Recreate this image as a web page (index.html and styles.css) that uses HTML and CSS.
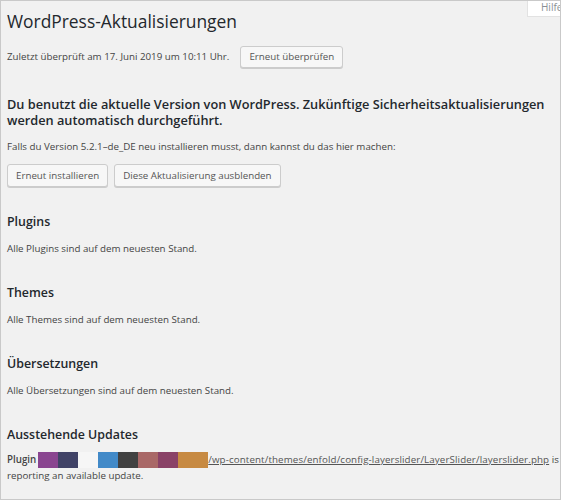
FILE: index.html
```html
<!DOCTYPE html>
<html lang="de">
<head>
<meta charset="utf-8">
<title>WordPress-Aktualisierungen</title>
<link rel="stylesheet" href="styles.css">
</head>
<body>
<div class="screen">
  <div class="help-tab">Hilfe</div>
  <div class="wrap">
    <h1 class="page-title">WordPress-Aktualisierungen</h1>
    <div class="checked-row">
      <span class="checked-text">Zuletzt überprüft am 17. Juni 2019 um 10:11 Uhr.</span>
      <button class="button">Erneut überprüfen</button>
    </div>

    <h2 class="response">Du benutzt die aktuelle Version von WordPress. Zukünftige Sicherheitsaktualisierungen werden automatisch durchgeführt.</h2>
    <p class="reinstall">Falls du Version 5.2.1–de_DE neu installieren musst, dann kannst du das hier machen:</p>
    <div class="actions">
      <button class="button button-tall">Erneut installieren</button>
      <button class="button button-tall">Diese Aktualisierung ausblenden</button>
    </div>

    <section class="block block-first">
      <h2 class="block-title">Plugins</h2>
      <p class="block-text">Alle Plugins sind auf dem neuesten Stand.</p>
    </section>
    <section class="block">
      <h2 class="block-title">Themes</h2>
      <p class="block-text">Alle Themes sind auf dem neuesten Stand.</p>
    </section>
    <section class="block">
      <h2 class="block-title">Übersetzungen</h2>
      <p class="block-text">Alle Übersetzungen sind auf dem neuesten Stand.</p>
    </section>
    <section class="block">
      <h2 class="block-title">Ausstehende Updates</h2>
      <p class="pending"><strong>Plugin</strong><span class="redact"><span class="sw sw-purple"></span><span class="sw sw-navy"></span><span class="sw sw-blank"></span><span class="sw sw-blue"></span><span class="sw sw-dark"></span><span class="sw sw-mauve"></span><span class="sw sw-plum"></span><span class="sw sw-orange"></span></span><a class="path" href="#">/wp-content/themes/enfold/config-layerslider/LayerSlider/layerslider.php</a> is<br>reporting an available update.</p>
    </section>
  </div>
</div>
</body>
</html>
```

FILE: styles.css
```css
* {
  box-sizing: border-box;
}

html,
body {
  margin: 0;
  padding: 0;
  background: #ffffff;
}

body {
  font-family: "Open Sans", "Noto Sans", sans-serif;
  font-size: 9.75px;
  line-height: 16px;
  color: #444444;
}

.screen {
  position: relative;
  width: 561px;
  height: 500px;
  border: 1px solid #c9c9c9;
  background: #f1f1f1;
  overflow: hidden;
}

.help-tab {
  position: absolute;
  top: 0;
  left: 526px;
  width: 44px;
  height: 16px;
  background: #ffffff;
  border: 1px solid #e2e2e2;
  border-top: none;
  padding-left: 13px;
  font-size: 10px;
  line-height: 13px;
  color: #8a8f94;
}

.wrap {
  padding: 0 0 0 6px;
}

.page-title {
  margin: 6px 0 0;
  font-size: 17.4px;
  font-weight: 400;
  line-height: 28px;
  color: #23282d;
}

.checked-row {
  display: flex;
  align-items: center;
  gap: 11px;
  margin-top: 11px;
}

.button {
  height: 22px;
  padding: 0 8px;
  font-family: inherit;
  font-size: 9.75px;
  line-height: 20px;
  color: #555555;
  background: #f7f7f7;
  border: 1px solid #cccccc;
  border-radius: 3px;
  box-shadow: 0 1px 0 #cccccc;
  cursor: pointer;
}

.button-tall {
  height: 23px;
  line-height: 21px;
}

.response {
  margin: 28px 0 0;
  font-size: 12.75px;
  font-weight: 600;
  line-height: 16px;
  color: #23282d;
}

.reinstall {
  margin: 11px 0 0;
}

.actions {
  display: flex;
  gap: 6px;
  margin-top: 9px;
}

.block {
  margin-top: 26px;
}

.block-first {
  margin-top: 25px;
}

.block-title {
  margin: 0;
  font-size: 12.4px;
  font-weight: 600;
  line-height: 20px;
  color: #23282d;
}

.block-text {
  margin: 9px 0 0;
}

.pending {
  margin: 7px 0 0;
}

.pending strong {
  font-weight: 600;
}

.redact {
  display: inline-flex;
  vertical-align: top;
  height: 16px;
  margin-left: 2px;
}

.sw {
  display: block;
  width: 20px;
  height: 16px;
}

.sw-purple { background: #8a4590; }
.sw-navy { background: #414367; }
.sw-blank { background: #f6f6f6; }
.sw-blue { background: #428ac8; }
.sw-dark { background: #414141; }
.sw-mauve { background: #a96867; }
.sw-plum { background: #8a4267; }
.sw-orange { width: 30px; background: #c78a42; }

.path {
  color: #555555;
  text-decoration: underline;
  letter-spacing: 0.12px;
}
```
